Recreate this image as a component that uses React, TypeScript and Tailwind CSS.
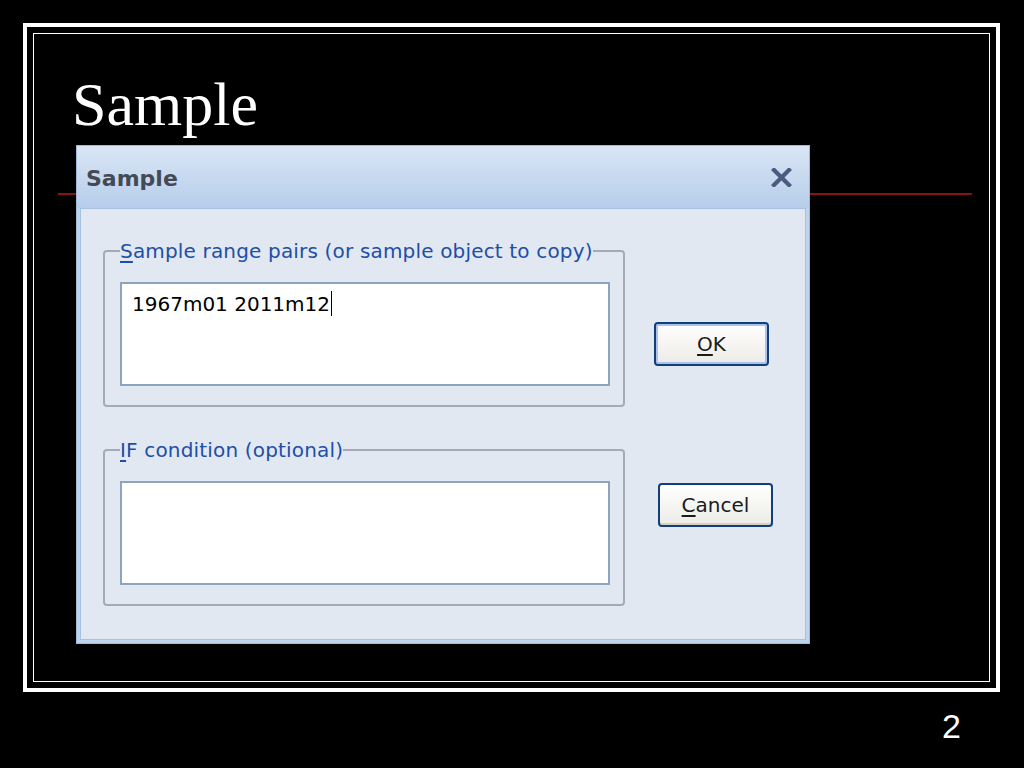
import React from "react";

const ui = { fontFamily: '"DejaVu Sans", Verdana, sans-serif' };

function Button({ label, accel, focused }: { label: string; accel: number; focused?: boolean }) {
  return (
    <div
      className={
        "flex h-[44px] w-[115px] items-center justify-center rounded-[4px] border-2 border-[#123e7a] bg-gradient-to-b from-[#ffffff] to-[#ecebe6] " +
        (focused ? "shadow-[inset_0_0_0_2px_#a9c4ec]" : "shadow-[inset_0_-2px_0_#d6d0c5]")
      }
    >
      <span className="text-[20px] leading-[26px] text-[#1a1a1a]" style={ui}>
        {label.slice(0, accel)}
        <span className="underline underline-offset-[3px]">{label.slice(accel, accel + 1)}</span>
        {label.slice(accel + 1)}
      </span>
    </div>
  );
}

function Group({ title, accel, children, mt }: { title: string; accel: number; children?: React.ReactNode; mt?: string }) {
  return (
    <fieldset
      className={
        "w-[522px] rounded-[4px] border-2 border-[#a3abb9] pb-[19px] pl-[15px] pr-[13px] pt-[19px] " + (mt ?? "")
      }
    >
      <legend className="px-0 text-[20px] leading-[24px] tracking-[0.17px] text-[#1d4fa6]" style={ui}>
        {title.slice(0, accel)}
        <span className="underline underline-offset-[3px]">{title.slice(accel, accel + 1)}</span>
        {title.slice(accel + 1)}
      </legend>
      <div className="h-[104px] w-[490px] border-2 border-[#8ea3bd] bg-white pl-[10px] pt-[8px]">{children}</div>
    </fieldset>
  );
}

export default function App() {
  return (
    <div className="relative h-[768px] w-[1024px] overflow-hidden bg-black">
      <div className="ml-[23px] mt-[23px] h-[669px] w-[977px] border-4 border-white p-[6px]">
        <div className="h-[649px] w-[957px] border border-white">
          <div
            className="ml-[38px] mt-[39px] text-[62px] leading-[62px] text-white"
            style={{ fontFamily: '"Liberation Serif", "Times New Roman", serif' }}
          >
            Sample
          </div>
          <div className="ml-[24px] mt-[58px] h-[2px] w-[914px] bg-[#8a1212]" />
        </div>
      </div>

      <div className="absolute left-[76px] top-[145px] flex h-[499px] w-[734px] flex-col border border-[#9fb9dc] bg-[#bed3ee]">
        <div className="flex h-[62px] items-start justify-between bg-gradient-to-b from-[#dae6f5] to-[#b6cdea] pl-[9px] pr-[17px] pt-[20px]">
          <span className="text-[22px] font-bold leading-[26px] text-[#444a55]" style={ui}>
            Sample
          </span>
          <svg width="21" height="19" viewBox="0 0 21 19" className="mt-[2px]">
            <path d="M3 2 L18 17 M18 2 L3 17" stroke="#4a5b80" strokeWidth="4.2" strokeLinecap="square" />
          </svg>
        </div>
        <div className="mx-[3px] mb-[3px] flex flex-1 border border-[#a9c0de] bg-[#e2e8f2] pl-[22px] pt-[30px]">
          <div className="flex flex-col">
            <Group title="Sample range pairs (or sample object to copy)" accel={0}>
              <div className="flex items-start">
                <span className="text-[20px] leading-[24px] text-black" style={ui}>
                  1967m01 2011m12
                </span>
                <span className="ml-[1px] mt-[-1px] h-[25px] w-[1px] bg-black" />
              </div>
            </Group>
            <Group title="IF condition (optional)" accel={0} mt="mt-[31px]" />
          </div>
          <div className="flex flex-col pt-[83px]">
            <div className="ml-[29px]">
              <Button label="OK" accel={0} focused />
            </div>
            <div className="ml-[33px] mt-[117px]">
              <Button label="Cancel" accel={0} />
            </div>
          </div>
        </div>
      </div>

      <div
        className="absolute left-[942px] top-[709px] text-[34px] leading-[34px] text-white"
        style={{ fontFamily: '"Liberation Sans", Arial, sans-serif' }}
      >
        2
      </div>
    </div>
  );
}
